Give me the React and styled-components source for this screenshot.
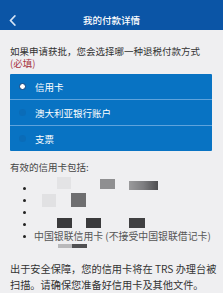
import styled, { createGlobalStyle } from 'styled-components';

const Global = createGlobalStyle`
  html, body {
    margin: 0;
    padding: 0;
    background: #efeff1;
  }
  body {
    font-family: "Noto Sans CJK SC", "Noto Sans", sans-serif;
    -webkit-font-smoothing: antialiased;
  }
`;

const Page = styled.div`
  width: 223px;
  height: 293px;
  overflow: hidden;
  background: #efeff1;
`;

const Header = styled.header`
  height: 30px;
  padding-top: 10px;
  box-sizing: border-box;
  background: #0b55a6;
  display: grid;
  grid-template-columns: 30px 1fr 30px;
  align-items: center;
`;

const Back = styled.div`
  display: flex;
  align-items: center;
  padding-left: 9px;
  height: 20px;
`;

const Title = styled.h1`
  margin: 0;
  text-align: center;
  color: #fff;
  font-size: 9.5px;
  font-weight: 500;
  line-height: 20px;
`;

const Body = styled.main`
  padding: 16px 11px 0 10px;
`;

const Question = styled.p`
  margin: 0;
  font-size: 9.5px;
  line-height: 11.5px;
  color: #333;
`;

const Required = styled.span`
  color: #a6323f;
`;

const Options = styled.div`
  margin-top: 5px;
  background: #0873c3;
  border-radius: 1px;
  display: flex;
  flex-direction: column;
`;

const Option = styled.div`
  height: 25px;
  display: flex;
  align-items: center;
  gap: 9px;
  padding-left: 9px;
  color: #fff;
  font-size: 9.5px;
  & + & {
    border-top: 1px solid #5ea3dc;
  }
`;

const Radio = styled.span`
  width: 7px;
  height: 7px;
  border-radius: 50%;
  box-sizing: border-box;
  background: ${(p) => (p.$on ? '#fff' : '#0a6cb8')};
  border: ${(p) => (p.$on ? '1.5px solid #0a3d7a' : 'none')};
`;

const Label = styled.p`
  margin: 10px 0 0;
  font-size: 9.5px;
  line-height: 12px;
  color: #444;
`;

const List = styled.ul`
  list-style: none;
  margin: 9px 0 0;
  padding: 0 0 0 13px;
`;

const Item = styled.li`
  height: 12px;
  display: flex;
  align-items: center;
  font-size: 9.9px;
  color: #555;
  white-space: nowrap;
  &::before {
    content: '';
    flex: none;
    width: 3px;
    height: 3px;
    border-radius: 50%;
    background: #222;
    margin-right: 8px;
  }
`;

const Blur = styled.span`
  flex: none;
  display: inline-block;
  width: ${(p) => p.$w}px;
  height: ${(p) => p.$h || 11}px;
  margin-left: ${(p) => p.$ml}px;
  transform: translateY(${(p) => p.$dy || 0}px);
  background: ${(p) => p.$bg};
  filter: blur(0.6px);
`;

const Under = styled.div`
  display: flex;
  margin: 2px 0 0 48px;
  height: 4px;
`;

const Note = styled.p`
  margin: 13px 0 0;
  font-size: 10.2px;
  line-height: 16px;
  color: #333;
  white-space: nowrap;
`;

const Chevron = () => (
  <svg width="7" height="11" viewBox="0 0 7 11">
    <path d="M5.8 1 L1.5 5.5 L5.8 10" fill="none" stroke="#d6e4f5" strokeWidth="1.8" strokeLinecap="round" strokeLinejoin="round" />
  </svg>
);

export default function App() {
  return (
    <Page>
      <Global />
      <Header>
        <Back>
          <Chevron />
        </Back>
        <Title>我的付款详情</Title>
        <span />
      </Header>
      <Body>
        <Question>
          如果申请获批，您会选择哪一种退税付款方式
          <br />
          <Required>(必填)</Required>
        </Question>
        <Options>
          <Option>
            <Radio $on />
            信用卡
          </Option>
          <Option>
            <Radio />
            澳大利亚银行账户
          </Option>
          <Option>
            <Radio />
            支票
          </Option>
        </Options>
        <Label>有效的信用卡包括:</Label>
        <List>
          <Item>
            <Blur $w={14} $h={12} $ml={23} $dy={-5} $bg="#e3e3e5" />
            <Blur $w={15} $h={10} $ml={29} $dy={-4} $bg="#8f8f91" />
            <Blur $w={29} $h={9} $ml={14} $dy={-3} $bg="linear-gradient(90deg, #9a9a9c, #7d7d80 50%, #4d4d50)" />
          </Item>
          <Item>
            <Blur $w={14} $h={13} $ml={8} $bg="#e1e1e3" />
            <Blur $w={15} $h={14} $ml={15} $bg="#6e6e70" />
          </Item>
          <Item />
          <Item>
            <Blur $w={15} $h={10} $ml={23} $dy={-1} $bg="#3a3a3c" />
            <Blur $w={15} $h={10} $ml={14} $dy={-1} $bg="#3a3a3c" />
            <Blur $w={16} $h={10} $ml={28} $dy={-1} $bg="#404042" />
          </Item>
          <Item>中国银联信用卡 (不接受中国银联借记卡)</Item>
        </List>
        <Under>
          <Blur $w={14} $h={4} $ml={0} $bg="#b9b9bb" />
          <Blur $w={15} $h={4} $ml={0} $bg="#505052" />
        </Under>
        <Note>
          出于安全保障，您的信用卡将在 TRS 办理台被
          <br />
          扫描。请确保您准备好信用卡及其他文件。
        </Note>
      </Body>
    </Page>
  );
}
